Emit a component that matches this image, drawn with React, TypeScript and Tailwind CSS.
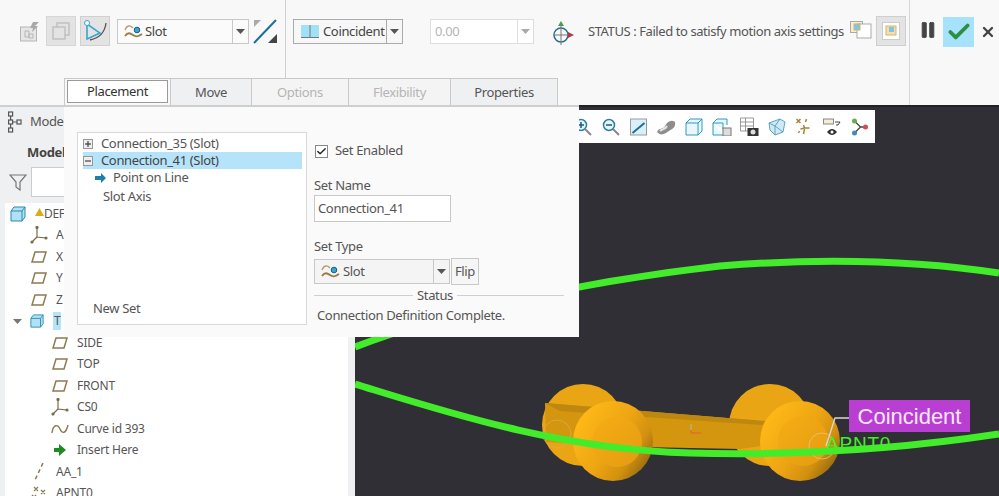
import React from "react";
import { Check, Pause, X } from "lucide-react";

const SlotIcon = () => (
  <svg width="19" height="15" viewBox="0 0 19 15" fill="none">
    <path d="M1 6c2-5 5-5 8-2" stroke="#b59a68" strokeWidth="1.300" />
    <path d="M1 12c3-4 5-3 8-1s5 2 9-1" stroke="#9a7c46" strokeWidth="2" />
    <circle cx="13" cy="6" r="2.800" fill="#3aa5d0" stroke="#14607f" />
  </svg>
);

const Caret = ({ color = "#555" }: { color?: string }) => (
  <svg width="9" height="5" viewBox="0 0 9 5">
    <path d="M0 0h9L4.500 5z" fill={color} />
  </svg>
);

const PlaneIcon = () => (
  <svg width="18" height="14" viewBox="0 0 18 14" fill="none">
    <path d="M5 2h11l-3 10H2z" stroke="#8f7a52" strokeWidth="1.500" />
  </svg>
);

const CsysIcon = () => (
  <svg width="18" height="18" viewBox="0 0 18 18" fill="none" stroke="#7a6a48" strokeWidth="1.200">
    <path d="M7 1v10l9 1M7 11l-5 5" />
    <circle cx="7" cy="1.500" r="1" fill="#555" />
    <circle cx="16" cy="12" r="1" fill="#555" />
    <circle cx="2" cy="16" r="1" fill="#555" />
  </svg>
);

const PartIcon = ({ size = 16 }: { size?: number }) => (
  <svg width={size} height={size} viewBox="0 0 16 16">
    <path d="M1 5l3-4h11v10l-3 4H1z" fill="#aee3f7" stroke="#2f87ad" />
    <path d="M1 5h11v10M12 5l3-4" fill="none" stroke="#2f87ad" />
  </svg>
);

const TreeRow = ({
  icon,
  label,
  indent,
}: {
  icon: React.ReactNode;
  label: string;
  indent: number;
}) => (
  <div className="flex h-[21.500px] items-center">
    <div className="flex shrink-0 justify-center" style={{ marginLeft: indent, width: 20 }}>
      {icon}
    </div>
    <span className="ml-[7px] text-[12px] tracking-[-0.200px] text-[#555]">{label}</span>
  </div>
);

const Sidebar = () => (
  <aside className="flex w-[355px] shrink-0 flex-col border-t-2 border-[#d0d0d0] bg-[#eef0f1]">
    <div className="flex h-[30px] items-center gap-[7px] pl-[8px]">
      <svg width="15" height="22" viewBox="0 0 15 22" fill="none" stroke="#555" strokeWidth="1.200">
        <rect x="0.600" y="1" width="4" height="4" />
        <rect x="0.600" y="9" width="4" height="4" />
        <rect x="0.600" y="17" width="4" height="4" />
        <rect x="9" y="9" width="4" height="4" />
        <path d="M2.600 5v4M2.600 13v4M4.600 11H9" />
      </svg>
      <span className="text-[13px] text-[#555]">Model</span>
    </div>
    <div className="pl-[27px] pt-[6px] text-[13px] leading-[18px] font-bold text-[#444]">Model Tree</div>
    <div className="flex items-center pl-[9px] pt-[6px]">
      <svg width="18" height="18" viewBox="0 0 18 18" fill="none" stroke="#777" strokeWidth="1.200">
        <path d="M1 2h16l-6 7v8l-4-3V9z" />
      </svg>
      <div className="ml-[4px] h-[30px] w-[60px] border border-[#ccc] bg-white" />
    </div>
    <div className="ml-[5px] mr-[7px] mt-[6px] flex-1 overflow-hidden bg-white">
      <div className="flex h-[21.500px] items-center pl-[5px]">
        <PartIcon size={16} />
        <svg className="mb-1 ml-[9px]" width="9" height="8" viewBox="0 0 9 8">
          <path d="M4.500 0L9 8H0z" fill="#e0a91a" />
        </svg>
        <span className="text-[12px] text-[#555]">DEF</span>
      </div>
      <TreeRow indent={24} icon={<CsysIcon />} label="A" />
      <TreeRow indent={24} icon={<PlaneIcon />} label="X" />
      <TreeRow indent={24} icon={<PlaneIcon />} label="Y" />
      <TreeRow indent={24} icon={<PlaneIcon />} label="Z" />
      <div className="flex h-[21.500px] items-center">
        <div className="ml-[8px] w-[17px]">
          <Caret color="#777" />
        </div>
        <PartIcon size={14} />
        <span className="ml-[9px] bg-[#b5e3fa] px-[1px] text-[12px] text-[#555]">T</span>
      </div>
      <TreeRow indent={45} icon={<PlaneIcon />} label="SIDE" />
      <TreeRow indent={45} icon={<PlaneIcon />} label="TOP" />
      <TreeRow indent={45} icon={<PlaneIcon />} label="FRONT" />
      <TreeRow indent={45} icon={<CsysIcon />} label="CS0" />
      <TreeRow
        indent={45}
        icon={
          <svg width="18" height="12" viewBox="0 0 18 12" fill="none" stroke="#8f7a52" strokeWidth="1.400">
            <path d="M1 10c1-9 6-9 8-4s6 5 8-4" />
          </svg>
        }
        label="Curve id 393"
      />
      <TreeRow
        indent={45}
        icon={
          <svg width="12" height="12" viewBox="0 0 12 12">
            <path d="M0 4h5V0l7 6-7 6V8H0z" fill="#1f8a1f" />
          </svg>
        }
        label="Insert Here"
      />
      <TreeRow
        indent={24}
        icon={
          <svg width="10" height="18" viewBox="0 0 10 18" fill="none" stroke="#8f7a52" strokeWidth="1.500">
            <path d="M9 0l-8 17" strokeDasharray="4 3" />
          </svg>
        }
        label="AA_1"
      />
      <TreeRow
        indent={24}
        icon={
          <svg width="16" height="14" viewBox="0 0 16 14" fill="none" stroke="#8f7a52" strokeWidth="1.300">
            <path d="M3 1l4 4M7 1L3 5M10 4l4 4M14 4l-4 4M1 9l4 4M5 9l-4 4" />
          </svg>
        }
        label="APNT0"
      />
    </div>
  </aside>
);

const CanvasToolIcons = () => (
  <div className="flex h-full items-center pl-[4px]">
    {/* zoom in */}
    <svg className="w-[28px] shrink-0" width="18" height="18" viewBox="0 0 18 18" fill="none">
      <circle cx="7" cy="7" r="5.500" stroke="#2b7fa5" strokeWidth="1.500" fill="#e8f6fc" />
      <path d="M11 11l6 6" stroke="#888" strokeWidth="2" />
      <path d="M4 7h6M7 4v6" stroke="#155f80" strokeWidth="1.500" />
    </svg>
    {/* zoom out */}
    <svg className="w-[28px] shrink-0" width="18" height="18" viewBox="0 0 18 18" fill="none">
      <circle cx="7" cy="7" r="5.500" stroke="#2b7fa5" strokeWidth="1.500" fill="#e8f6fc" />
      <path d="M11 11l6 6" stroke="#888" strokeWidth="2" />
      <path d="M4 7h6" stroke="#155f80" strokeWidth="1.500" />
    </svg>
    <svg className="w-[27px] shrink-0" width="18" height="18" viewBox="0 0 18 18" fill="none">
      <rect x="1" y="1" width="16" height="16" fill="#d8f0fa" stroke="#999" />
      <path d="M3 15L15 5" stroke="#1f6f96" strokeWidth="2" />
    </svg>
    <svg className="w-[28px] shrink-0" width="20" height="18" viewBox="0 0 20 18">
      <path d="M1 14c2-5 6-2 8-6s6-7 10-4c1 6-3 7-6 9s-8 6-12 1z" fill="#8d8d8d" />
      <path d="M4 13c3-3 5-1 7-5" stroke="#e5e5e5" strokeWidth="2" fill="none" />
    </svg>
    <svg className="w-[28px] shrink-0" width="18" height="18" viewBox="0 0 18 18" fill="#e9f7fc" stroke="#2f9ac4">
      <path d="M1 5l4-4h12v12l-4 4H1z" />
      <path d="M1 5h12v12M13 5l4-4" fill="none" />
    </svg>
    <svg className="w-[28px] shrink-0" width="20" height="18" viewBox="0 0 20 18" fill="none" stroke="#2f9ac4">
      <path d="M1 5l4-4h10v6M1 5v12h10M1 5h10v6" fill="#e9f7fc" />
      <rect x="11" y="10" width="8" height="8" fill="#ddd" stroke="#777" />
    </svg>
    <svg className="w-[27px] shrink-0" width="20" height="20" viewBox="0 0 20 20" fill="none">
      <path d="M1 1h13v13H1zM1 5h13M1 9h13M6 1v13" stroke="#999" />
      <rect x="8" y="11" width="11" height="8" fill="#333" />
      <circle cx="13.500" cy="15" r="2.500" fill="#ddd" />
    </svg>
    <svg className="w-[28px] shrink-0" width="18" height="18" viewBox="0 0 18 18" fill="#cfeaf5" stroke="#5aa4c4">
      <path d="M1 5l11-4 5 3-2 10-8 3-5-5z" />
      <path d="M1 5l6 3 5-7M7 8l0 9M7 8l8 6" fill="none" />
    </svg>
    <svg className="w-[27px] shrink-0" width="18" height="18" viewBox="0 0 18 18" fill="none" stroke="#a5853c" strokeWidth="1.500">
      <path d="M1 1l4 4M5 1L1 5M11 1l-1 3M8 7l1 3-4 1M9 10l5 0M9 11l-1 5M3 15l1-2" />
    </svg>
    <svg className="w-[28px] shrink-0" width="18" height="18" viewBox="0 0 18 18" fill="none">
      <rect x="0.500" y="1" width="10" height="5" fill="#f6edd3" stroke="#888" />
      <path d="M12 4h5l-2 3h-2" stroke="#444" />
      <path d="M4 14c3-4 7-4 10 0-3 4-7 4-10 0z" fill="#333" />
      <circle cx="9" cy="14" r="1.500" fill="#fff" />
    </svg>
    <svg className="w-[27px] shrink-0" width="18" height="18" viewBox="0 0 18 18" fill="none">
      <path d="M4 3l6 6-6 6M10 9h5" stroke="#444" strokeWidth="1.300" />
      <circle cx="4" cy="3" r="2.500" fill="#6aaa4a" />
      <circle cx="4" cy="15" r="2.500" fill="#3a8fb8" />
      <circle cx="15" cy="9" r="2.500" fill="#d05050" />
    </svg>
  </div>
);

const Model = () => (
  <svg className="absolute inset-0" width="644" height="389" viewBox="0 0 644 389" fill="none">
    <defs>
      <linearGradient id="wheel" x1="0.050" y1="0.200" x2="0.950" y2="0.800">
        <stop offset="0" stopColor="#ffba17" />
        <stop offset="0.500" stopColor="#eea513" />
        <stop offset="0.780" stopColor="#d29010" />
        <stop offset="1" stopColor="#946a10" />
      </linearGradient>
      <linearGradient id="face" x1="0" y1="0" x2="1" y2="1">
        <stop offset="0" stopColor="#f6ad14" />
        <stop offset="1" stopColor="#e49c12" />
      </linearGradient>
    </defs>
    <g transform="translate(-355 -105)">
      <path d="M355 345C430 316 560 282 720 264c110-9 200-5 279 7" stroke="#42ec2a" strokeWidth="7" />
      <circle cx="583" cy="423" r="41" fill="#eaa514" />
      <circle cx="770" cy="423" r="41" fill="#eaa514" />
      <path d="M545 401L765 419 760 444 740 447 640 445 546 440z" fill="#d4950f" />
      <path d="M545 401L765 419 762 423 560 409z" fill="#bd8710" />
      <circle cx="613" cy="439" r="40" fill="url(#wheel)" />
      <circle cx="617" cy="440" r="25" fill="url(#face)" />
      <circle cx="800" cy="439" r="40" fill="url(#wheel)" />
      <circle cx="803" cy="439" r="25" fill="url(#face)" />
      <path d="M691 422v9M691 431h10" stroke="#e0603a" strokeWidth="1" />
      <path d="M691 422v6" stroke="#9be08a" strokeWidth="1" />
      <circle cx="557" cy="432" r="14" stroke="#d9a95a" strokeWidth="0.800" />
      <circle cx="822" cy="444" r="13" stroke="#e8c37a" strokeWidth="0.800" />
      <path d="M355 382C440 408 560 448 690 451 800 454 900 447 999 432" stroke="#42ec2a" strokeWidth="7" />
      <path d="M849 416H835L826 444" stroke="#d9d9d9" strokeWidth="1.300" />
    </g>
  </svg>
);

const Canvas = () => (
  <main className="relative flex-1 overflow-hidden border-t-2 border-[#222] bg-[#2f2f35]">
    <Model />
    <div className="relative ml-[210px] mt-[3px] h-[33px] w-[310px] bg-white">
      <CanvasToolIcons />
    </div>
    <span className="absolute left-[471px] top-[325px] font-['Liberation_Sans',sans-serif] text-[19px] leading-[24px] tracking-[0.800px] text-[#42ec2a]">
      APNT0
    </span>
    <div className="absolute left-[494px] top-[293px] flex h-[32px] w-[121px] items-center justify-center bg-[#b93fd3] font-['Liberation_Sans',sans-serif] text-[22px] tracking-normal text-[#fbe6fb]">
      Coincident
    </div>
  </main>
);

const Toolbar = () => (
  <header className="flex h-[105px] shrink-0 bg-[#f8f8f8]">
    <div className="flex w-[286px] shrink-0 items-start border-r border-[#cfcfcf] pl-[20px] pt-[16px]">
      <svg className="mt-[5px]" width="20" height="21" viewBox="0 0 20 21" fill="none" stroke="#b5b5b5">
        <rect x="0.500" y="6" width="16" height="14" fill="#e6e6e6" />
        <path d="M5 10h4v6H5zM9 13h4v4H9z" />
        <path d="M13 1h6l-4 4h3l-6 6 1-4h-3z" fill="#a9a9a9" stroke="none" />
      </svg>
      <div className="ml-[6px] flex h-[30px] w-[30px] items-center justify-center border border-[#d6d6d6] bg-[#e3e3e3]">
        <svg width="18" height="18" viewBox="0 0 18 18" fill="none" stroke="#bcbcbc" strokeWidth="1.300">
          <rect x="5" y="1" width="12" height="12" />
          <rect x="1" y="5" width="12" height="12" fill="#e3e3e3" />
        </svg>
      </div>
      <div className="ml-[4px] flex h-[30px] w-[30px] items-center justify-center border border-[#d0d0d0] bg-[#e3e3e3]">
        <svg width="24" height="25" viewBox="0 0 24 25" fill="none">
          <path d="M23 4c-1 9-7 15-16 17" stroke="#555" strokeWidth="1.300" />
          <path d="M4 5v15l13-6z" stroke="#3ea4cb" strokeWidth="1.600" />
          <circle cx="4" cy="4" r="2.500" fill="#fff" stroke="#3ea4cb" />
        </svg>
      </div>
      <div className="ml-[7px] mt-[3px] flex h-[25px] w-[132px] items-center border border-[#c8c8c8] bg-[#fbfbfb]">
        <div className="flex flex-1 items-center gap-[2px] pl-[6px] text-[13px] text-[#444]">
          <SlotIcon />
          <span>Slot</span>
        </div>
        <div className="flex h-full w-[16px] items-center justify-center border-l border-[#c8c8c8]">
          <Caret />
        </div>
      </div>
      <svg className="ml-[4px] mt-[3px]" width="25" height="25" viewBox="0 0 25 25" fill="none">
        <path d="M1 24L23 1" stroke="#1f6f96" strokeWidth="2" />
        <path d="M1 1h7L1 8z" fill="#a9a9a9" />
        <path d="M24 24h-9l9-9z" fill="#444" />
      </svg>
    </div>
    <div className="flex w-[624px] shrink-0 items-start border-r border-[#d6d6d6] pl-[7px] pt-[19px]">
      <div className="flex h-[25px] w-[110px] items-center border border-[#aaa] bg-[#f7f7f7]">
        <div className="flex flex-1 items-center gap-[4px] pl-[7px] text-[13px] text-[#444]">
          <svg width="18" height="13" viewBox="0 0 18 13">
            <rect width="18" height="13" fill="#9fe2f8" />
            <path d="M9 0v13M0 12.500h18" stroke="#777" />
          </svg>
          <span>Coincident</span>
        </div>
        <div className="flex h-full w-[16px] items-center justify-center border-l border-[#aaa]">
          <Caret />
        </div>
      </div>
      <div className="ml-[27px] flex h-[25px] w-[104px] items-center border border-[#dedede] bg-white">
        <span className="flex-1 pl-[4px] text-[13px] text-[#b5b5b5]">0.00</span>
        <div className="flex h-full w-[16px] items-center justify-center border-l border-[#dedede]">
          <Caret color="#aaa" />
        </div>
      </div>
      <svg className="ml-[17px] mt-[2px]" width="24" height="24" viewBox="0 0 24 24" fill="none">
        <circle cx="10" cy="14" r="7" stroke="#2b6f8f" strokeWidth="1.500" />
        <path d="M10 4v20M3 14h14" stroke="#777" />
        <path d="M10 0l3 5H7z" fill="#4f9a4f" />
        <path d="M23 14l-6-3v6z" fill="#b23a3a" />
      </svg>
      <span className="ml-[13px] mt-[3px] w-[262px] whitespace-nowrap text-[13px] tracking-[-0.420px] text-[#555]">
        STATUS : Failed to satisfy motion axis settings
      </span>
      <svg className="ml-[0px] mt-[2px]" width="22" height="18" viewBox="0 0 22 18" fill="none">
        <rect x="0.500" y="0.500" width="12" height="11" fill="#f6edd3" stroke="#aaa" />
        <rect x="7" y="3" width="14" height="14" fill="#fff" stroke="#aaa" />
        <rect x="4" y="3" width="6" height="6" fill="#7cc6e6" stroke="#d9b36a" />
      </svg>
      <div className="ml-[4px] mt-[-3px] flex h-[30px] w-[30px] items-center justify-center border border-[#cfcfcf] bg-[#e3e3e3]">
        <svg width="18" height="18" viewBox="0 0 18 18">
          <rect x="0.500" y="0.500" width="17" height="17" fill="#fff" stroke="#ccc" />
          <rect x="4" y="4" width="10" height="9" fill="#f6dfae" stroke="#d9b36a" />
          <rect x="7" y="5" width="5" height="5" fill="#7cc6e6" />
        </svg>
      </div>
    </div>
    <div className="flex flex-1 items-start pl-[8px] pt-[17px]">
      <Pause className="mt-[3px]" size={20} fill="#444" stroke="#444" strokeWidth={1} />
      <div className="ml-[5px] flex h-[30px] w-[31px] items-center justify-center bg-[#a6e2fb]">
        <Check size={26} stroke="#2f8f3f" strokeWidth={3.500} />
      </div>
      <X className="ml-[6px] mt-[7px]" size={16} stroke="#444" strokeWidth={3.500} />
    </div>
  </header>
);

const tabBase =
  "flex h-full items-center justify-center border-t border-r border-[#c9c9c9] pt-[1px] text-[13px]";

const PlacementPopup = () => (
  <section className="absolute left-[64px] top-[78px] w-[515px]">
    <div className="flex h-[27px] w-[494px]">
      <div className={`${tabBase} w-[107px] border-l bg-[#f8f8f8] p-[2px] text-[#333]`}>
        <div className="flex h-full w-full items-center justify-center border border-[#9a9a9a] bg-white">Placement</div>
      </div>
      <div className={`${tabBase} w-[81px] bg-[#eff0f1] text-[#555]`}>Move</div>
      <div className={`${tabBase} w-[97px] bg-[#f4f4f4] text-[#b5b5b5]`}>Options</div>
      <div className={`${tabBase} w-[102px] bg-[#f4f4f4] text-[#b5b5b5]`}>Flexibility</div>
      <div className={`${tabBase} w-[107px] bg-[#eff0f1] text-[#555]`}>Properties</div>
    </div>
    <div className="flex h-[232px] border-t-2 border-[#cfcfcf] bg-[#fafafa] pl-[13px] pt-[25px]">
      <div className="flex h-[193px] w-[230px] flex-col border border-[#d8d8d8] bg-white pl-[5px] pr-[4px] pt-[2px] text-[13px] text-[#555]">
        <div className="flex h-[17px] items-center">
          <svg width="10" height="10" viewBox="0 0 10 10" fill="none">
            <rect x="0.500" y="0.500" width="9" height="9" fill="#eee" stroke="#999" />
            <path d="M2 5h6M5 2v6" stroke="#222" />
          </svg>
          <span className="ml-[8px]">Connection_35 (Slot)</span>
        </div>
        <div className="flex h-[17px] items-center bg-[#b5e3fa]">
          <svg width="10" height="10" viewBox="0 0 10 10" fill="none">
            <rect x="0.500" y="0.500" width="9" height="9" fill="#eee" stroke="#999" />
            <path d="M2 5h6" stroke="#222" />
          </svg>
          <span className="ml-[8px] text-[#444]">Connection_41 (Slot)</span>
        </div>
        <div className="flex h-[18px] items-center pl-[12px]">
          <svg width="11" height="10" viewBox="0 0 11 10">
            <path d="M0 3h6V0l5 5-5 5V7H0z" fill="#1f7fa8" />
          </svg>
          <span className="ml-[7px]">Point on Line</span>
        </div>
        <div className="flex h-[20px] items-center pl-[20px]">Slot Axis</div>
        <div className="mt-auto pb-[6px] pl-[10px]">New Set</div>
      </div>
      <div className="ml-[7px] w-[250px] text-[13px] text-[#555]">
        <label className="mt-[10px] flex h-[18px] items-center pl-[1px]">
          <span className="flex h-[13px] w-[13px] items-center justify-center border border-[#888] bg-white">
            <Check size={11} stroke="#222" strokeWidth={3} />
          </span>
          <span className="ml-[7px]">Set Enabled</span>
        </label>
        <div className="mt-[16px] leading-[18px]">Set Name</div>
        <div className="mt-[1px] flex h-[27px] w-[137px] items-center border border-[#c8c8c8] bg-white pl-[3px]">
          Connection_41
        </div>
        <div className="mt-[15px] leading-[18px]">Set Type</div>
        <div className="mt-[4px] flex items-start">
          <div className="flex h-[25px] w-[136px] items-center border border-[#c8c8c8] bg-[#f4f4f4]">
            <div className="flex flex-1 items-center gap-[3px] pl-[6px]">
              <SlotIcon />
              <span>Slot</span>
            </div>
            <div className="flex h-full w-[16px] items-center justify-center border-l border-[#c8c8c8]">
              <Caret />
            </div>
          </div>
          <div className="ml-[1px] mt-[-1px] flex h-[27px] w-[28px] items-center justify-center border border-[#c8c8c8] bg-[#f6f6f6]">
            Flip
          </div>
        </div>
        <div className="mt-[1px] flex w-[250px] items-center">
          <div className="h-px flex-1 bg-[#cfcfcf]" />
          <span className="px-[4px] leading-[18px]">Status</span>
          <div className="h-px w-[107px] bg-[#cfcfcf]" />
        </div>
        <div className="mt-[2px] pl-[3px] leading-[18px]">Connection Definition Complete.</div>
      </div>
    </div>
  </section>
);

export default function App() {
  return (
    <div className="relative flex h-[496px] w-[999px] flex-col overflow-hidden bg-white font-['Noto_Sans',sans-serif] tracking-[-0.350px]">
      <Toolbar />
      <div className="flex h-[391px]">
        <Sidebar />
        <Canvas />
      </div>
      <PlacementPopup />
    </div>
  );
}
